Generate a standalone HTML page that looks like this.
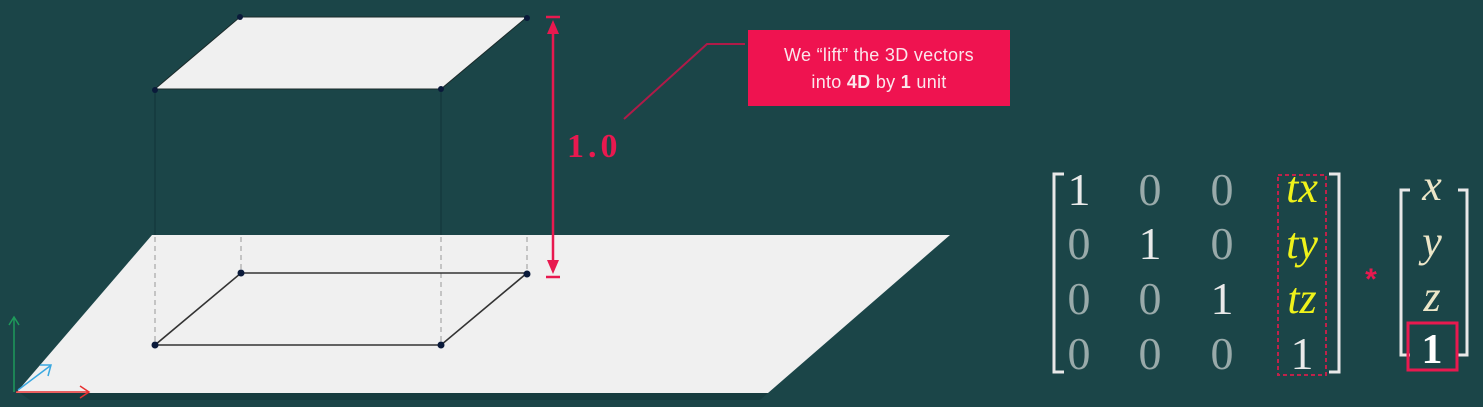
<!DOCTYPE html>
<html><head><meta charset="utf-8"><style>
html,body{margin:0;padding:0;background:#1b4548;width:1483px;height:407px;overflow:hidden}
svg{display:block}
</style></head><body>
<svg width="1483" height="407" viewBox="0 0 1483 407" xmlns="http://www.w3.org/2000/svg">
<rect width="1483" height="407" fill="#1b4548"/>
<polygon points="152,235 950,235 768,393 16,393" fill="#f0f0f0"/>
<polygon points="20,393 768,393 760,400 30,400" fill="#14373a" opacity="0.6"/>
<g stroke="#0f2e30" stroke-width="1" opacity="0.7">
<line x1="155" y1="89" x2="155" y2="235"/><line x1="441" y1="89" x2="441" y2="235"/>
</g>
<g stroke="#999" stroke-width="1" stroke-dasharray="5,4">
<line x1="155" y1="237" x2="155" y2="345"/><line x1="441" y1="237" x2="441" y2="345"/>
<line x1="241" y1="237" x2="241" y2="273"/><line x1="527" y1="237" x2="527" y2="273"/>
</g>
<polygon points="240,17 527,17 441,89 155,89" fill="#f0f0f0" stroke="#1a2a2a" stroke-width="1"/>
<polygon points="241,273 527,273 441,345 155,345" fill="none" stroke="#333" stroke-width="1.6"/>
<g fill="#0a1a3a">
<circle cx="240" cy="17" r="3"/><circle cx="527" cy="18" r="3"/><circle cx="441" cy="89" r="3"/><circle cx="155" cy="90" r="3"/>
<circle cx="241" cy="273" r="3.5"/><circle cx="527" cy="274" r="3.5"/><circle cx="441" cy="345" r="3.5"/><circle cx="155" cy="345" r="3.5"/>
</g>
<g stroke="#e8194f" stroke-width="2.5" fill="#e8194f">
<line x1="546" y1="17" x2="560" y2="17"/><line x1="546" y1="277" x2="560" y2="277"/>
<line x1="553" y1="30" x2="553" y2="262"/>
<polygon points="553,20 547,34 559,34" stroke="none"/>
<polygon points="553,274 547,260 559,260" stroke="none"/>
</g>
<text x="567" y="157" font-family="Liberation Serif, serif" font-weight="bold" font-size="34" letter-spacing="4" fill="#e8194f">1.0</text>
<polyline points="624,119 707,44 745,44" fill="none" stroke="#b01a48" stroke-width="2"/>
<rect x="748" y="30" width="262" height="76" fill="#ef1350"/>
<text font-family="Liberation Sans, sans-serif" font-size="18" fill="#fbe6ec" text-anchor="middle" letter-spacing="0.3"><tspan x="879" y="61">We “lift” the 3D vectors</tspan><tspan x="879" y="88">into <tspan font-weight="bold">4D</tspan> by <tspan font-weight="bold">1</tspan> unit</tspan></text>
<g fill="none" stroke-width="1.5">
<path d="M14,392 V318 M9,325 L14,317 L19,325" stroke="#1e9a5a"/>
<path d="M16,392 H88 M80,386 L89,392 L80,398" stroke="#e83030"/>
<path d="M18,390 L50,366 M40,365 L51,365 L48,376" stroke="#3aa8e0"/>
</g>
<g fill="none" stroke="#e8e8e8" stroke-width="3">
<path d="M1064,174 H1054 V372 H1064"/>
<path d="M1329,174 H1339 V372 H1329"/>
<path d="M1410,190 H1401 V355 H1410"/>
<path d="M1458,190 H1467 V355 H1458"/>
</g>
<rect x="1278" y="175" width="48" height="200" fill="none" stroke="#c0224a" stroke-width="2" stroke-dasharray="4,3"/>
<g font-family="Liberation Serif, serif" font-size="46" text-anchor="middle">
<text x="1079" y="205" fill="#eaeaea">1</text><text x="1150" y="205" fill="#9aa">0</text><text x="1222" y="205" fill="#9aa">0</text>
<text x="1079" y="259" fill="#9aa">0</text><text x="1150" y="259" fill="#eaeaea">1</text><text x="1222" y="259" fill="#9aa">0</text>
<text x="1079" y="314" fill="#9aa">0</text><text x="1150" y="314" fill="#9aa">0</text><text x="1222" y="314" fill="#eaeaea">1</text>
<text x="1079" y="369" fill="#9aa">0</text><text x="1150" y="369" fill="#9aa">0</text><text x="1222" y="369" fill="#9aa">0</text>
<text x="1302" y="369" fill="#eaeaea">1</text>
<g font-style="italic" font-size="44" fill="#eef21a"><text x="1302" y="202">tx</text><text x="1302" y="258">ty</text><text x="1302" y="313">tz</text></g>
<g font-style="italic" font-size="44" fill="#ece6c8"><text x="1432" y="200">x</text><text x="1432" y="256">y</text><text x="1432" y="311">z</text></g>
<text x="1432" y="363" fill="#ffffff" font-weight="bold" font-size="42">1</text>
</g>
<text x="1371" y="289" font-family="Liberation Sans, sans-serif" font-size="30" font-weight="bold" fill="#e8194f" text-anchor="middle">*</text>
<rect x="1408" y="323" width="49" height="47" fill="none" stroke="#e8194f" stroke-width="3"/>
</svg>
</body></html>
